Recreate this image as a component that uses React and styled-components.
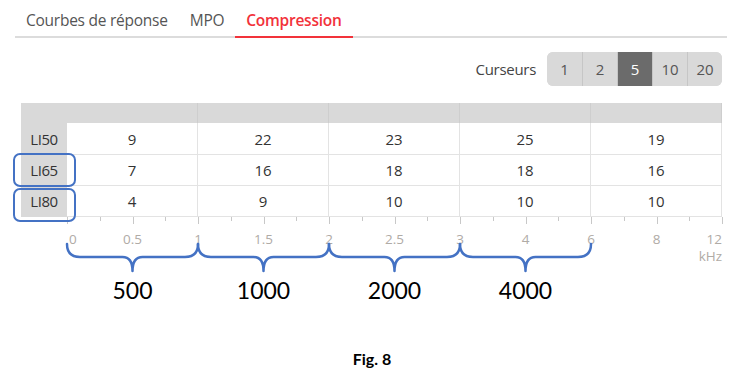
import React from "react";
import styled, { createGlobalStyle } from "styled-components";

const GlobalStyle = createGlobalStyle`
  html, body {
    margin: 0;
    padding: 0;
    background: #fff;
  }
  * {
    box-sizing: border-box;
  }
`;

const Page = styled.div`
  position: relative;
  width: 744px;
  height: 382px;
  background: #fff;
  font-family: "Open Sans", "Noto Sans", sans-serif;
  color: #333;
  overflow: hidden;
`;

const TabBar = styled.div`
  display: flex;
  margin: 0 17px 0 15px;
  height: 38px;
  border-bottom: 2px solid #dcdcdc;
`;

const Tab = styled.div`
  display: flex;
  align-items: center;
  padding: 3px 11px 0;
  margin-bottom: -2px;
  font-size: 15.5px;
  letter-spacing: -0.25px;
  color: ${({ active }) => (active ? "#f2323a" : "#555")};
  font-weight: ${({ active }) => (active ? 600 : 400)};
  border-bottom: 2px solid ${({ active }) => (active ? "#f2323a" : "transparent")};
`;

const Controls = styled.div`
  display: flex;
  justify-content: flex-end;
  align-items: center;
  gap: 11px;
  margin-top: 14px;
  padding-right: 22px;
  height: 34px;
`;

const ControlLabel = styled.span`
  font-size: 15px;
  letter-spacing: -0.3px;
  color: #444;
`;

const Segments = styled.div`
  display: flex;
  height: 34px;
  border-radius: 6px;
  overflow: hidden;
  background: #d9d9d9;
`;

const Segment = styled.div`
  width: 35px;
  display: flex;
  align-items: center;
  justify-content: center;
  font-size: 15px;
  color: ${({ active }) => (active ? "#fff" : "#555")};
  background: ${({ active }) => (active ? "#6b6b6b" : "#d9d9d9")};
  & + & {
    border-left: 1px solid #c6c6c6;
  }
`;

const Table = styled.div`
  display: grid;
  grid-template-columns: 46px repeat(5, 131px);
  grid-template-rows: 20px 32px 31px 31px;
  margin: 17px 0 0 21px;
  width: 701px;
`;

const HeadCell = styled.div`
  background: #d9d9d9;
  border-right: 1px solid ${({ first }) => (first ? "#d9d9d9" : "#cecece")};
`;

const RowLabel = styled.div`
  background: #d9d9d9;
  display: flex;
  align-items: center;
  justify-content: center;
  font-size: 15px;
  letter-spacing: -0.4px;
  color: #333;
  border-bottom: 1px solid #d9d9d9;
`;

const Cell = styled.div`
  display: flex;
  align-items: center;
  justify-content: center;
  font-size: 15px;
  color: #333;
  border-right: 1px solid #e3e3e3;
  border-bottom: 1px solid #e3e3e3;
`;

const Axis = styled.svg`
  display: block;
  margin-top: -1px;
`;

const BandLabels = styled.div`
  display: grid;
  grid-template-columns: repeat(4, 131px);
  margin: 2px 0 0 67px;
`;

const BandLabel = styled.div`
  text-align: center;
  font-family: Lato, "Open Sans", sans-serif;
  font-size: 23px;
  color: #000;
`;

const Caption = styled.div`
  margin-top: 45px;
  text-align: center;
  font-family: Lato, "Open Sans", sans-serif;
  font-weight: 700;
  font-size: 16px;
  color: #000;
`;

const Highlight = styled.div`
  position: absolute;
  left: 13px;
  width: 63px;
  height: 34px;
  border: 2.5px solid #4472c4;
  border-radius: 7px;
`;

const rows = [
  { label: "LI50", values: [9, 22, 23, 25, 19] },
  { label: "LI65", values: [7, 16, 18, 18, 16] },
  { label: "LI80", values: [4, 9, 10, 10, 10] },
];

const tickLabels = ["0", "0.5", "1", "1.5", "2", "2.5", "3", "4", "6", "8", "12"];
const bands = ["500", "1000", "2000", "4000"];

const brace = (x0, x1) => {
  const m = (x0 + x1) / 2;
  return `M ${x0} 28 Q ${x0} 41 ${x0 + 13} 41 L ${m - 10} 41 Q ${m} 41 ${m} 55 Q ${m} 41 ${m + 10} 41 L ${x1 - 13} 41 Q ${x1} 41 ${x1} 28`;
};

const App = () => {
  const step = 655 / 20;

  return (
    <Page>
      <GlobalStyle />
      <TabBar>
        <Tab>Courbes de réponse</Tab>
        <Tab>MPO</Tab>
        <Tab active>Compression</Tab>
      </TabBar>

      <Controls>
        <ControlLabel>Curseurs</ControlLabel>
        <Segments>
          {["1", "2", "5", "10", "20"].map((v) => (
            <Segment key={v} active={v === "5"}>
              {v}
            </Segment>
          ))}
        </Segments>
      </Controls>

      <Table>
        <HeadCell first />
        {[0, 1, 2, 3, 4].map((i) => (
          <HeadCell key={i} />
        ))}
        {rows.map((row) => (
          <React.Fragment key={row.label}>
            <RowLabel>{row.label}</RowLabel>
            {row.values.map((v, i) => (
              <Cell key={i}>{v}</Cell>
            ))}
          </React.Fragment>
        ))}
      </Table>

      <Axis width="744" height="58" viewBox="0 0 744 58">
        {Array.from({ length: 21 }).map((_, i) => {
          const x = Math.round(67 + i * step) + 0.5;
          const major = i % 2 === 0;
          return (
            <line
              key={i}
              x1={x}
              x2={x}
              y1={1}
              y2={major ? 8 : 5}
              stroke="#c8c8c8"
              strokeWidth="1"
            />
          );
        })}
        {tickLabels.map((t, i) => {
          const x = 67 + i * 2 * step;
          const anchor = i === 0 ? "start" : i === tickLabels.length - 1 ? "end" : "middle";
          return (
            <text
              key={t}
              x={i === 0 ? 69 : i === tickLabels.length - 1 ? 722 : x}
              y={28}
              textAnchor={anchor}
              fontFamily="Open Sans, sans-serif"
              fontSize="13.5"
              fill="#b0aba6"
            >
              {t}
            </text>
          );
        })}
        <text x={722} y={45} textAnchor="end" fontFamily="Open Sans, sans-serif" fontSize="13.5" fill="#b0aba6">
          kHz
        </text>
        {[0, 1, 2, 3].map((i) => (
          <path
            key={i}
            d={brace(67 + i * 131, 67 + (i + 1) * 131)}
            fill="none"
            stroke="#4472c4"
            strokeWidth="2.5"
            strokeLinecap="round"
            strokeLinejoin="round"
          />
        ))}
      </Axis>

      <BandLabels>
        {bands.map((b) => (
          <BandLabel key={b}>{b}</BandLabel>
        ))}
      </BandLabels>

      <Caption>Fig. 8</Caption>

      <Highlight style={{ top: 153 }} />
      <Highlight style={{ top: 188 }} />
    </Page>
  );
};

export default App;
